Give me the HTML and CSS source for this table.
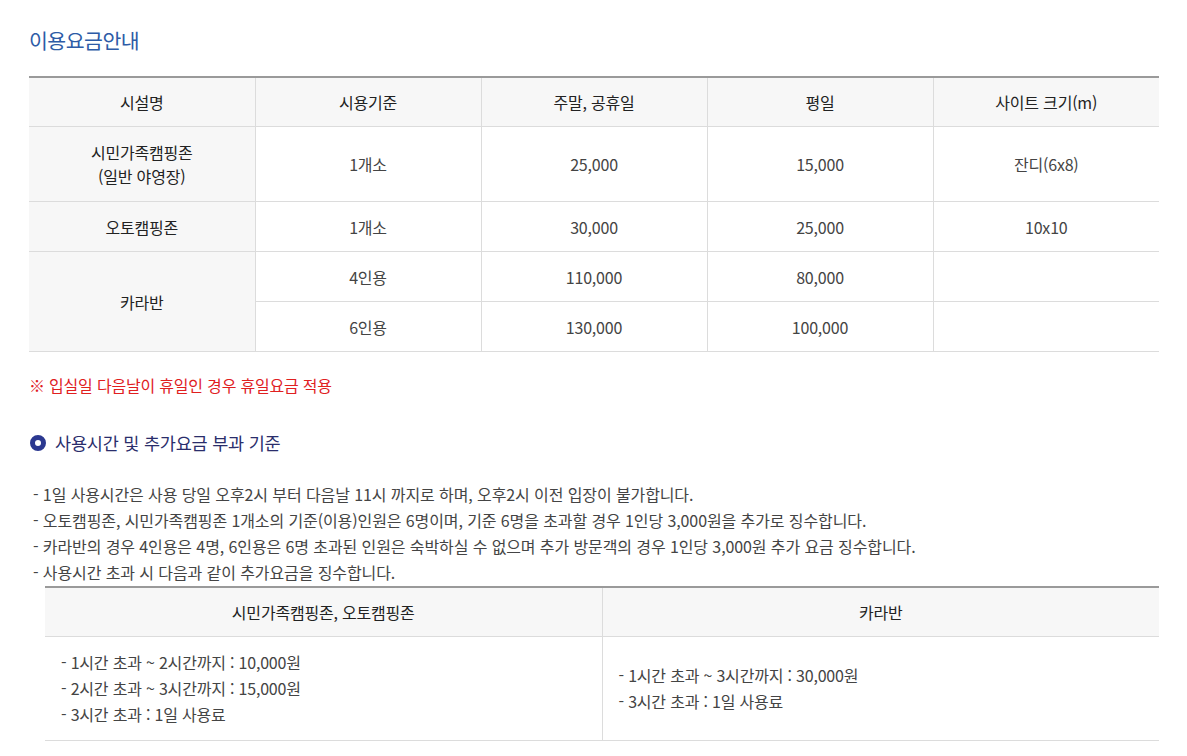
FILE: index.html
```html
<!DOCTYPE html>
<html lang="ko">
    <head>
        <meta charset="UTF-8" />
        <meta name="viewport" content="width=device-width, initial-scale=1.0" />
        <title>이용요금안내</title>
        <link rel="stylesheet" href="styles.css">
    </head>
    <body>
        <main class="content">
            <h2 class="title">이용요금안내</h2>

            <table class="price-table">
                <thead>
                    <tr>
                        <th>시설명</th>
                        <th>시용기준</th>
                        <th>주말, 공휴일</th>
                        <th>평일</th>
                        <th>사이트 크기(m)</th>
                    </tr>
                </thead>
                <tbody>
                    <tr class="tall">
                        <th>시민가족캠핑존<br />(일반 야영장)</th>
                        <td>1개소</td>
                        <td>25,000</td>
                        <td>15,000</td>
                        <td>잔디(6x8)</td>
                    </tr>
                    <tr>
                        <th>오토캠핑존</th>
                        <td>1개소</td>
                        <td>30,000</td>
                        <td>25,000</td>
                        <td>10x10</td>
                    </tr>
                    <tr>
                        <th rowspan="2">카라반</th>
                        <td>4인용</td>
                        <td>110,000</td>
                        <td>80,000</td>
                        <td></td>
                    </tr>
                    <tr>
                        <td>6인용</td>
                        <td>130,000</td>
                        <td>100,000</td>
                        <td></td>
                    </tr>
                </tbody>
            </table>

            <p class="notice">※ 입실일 다음날이 휴일인 경우 휴일요금 적용</p>

            <h3 class="sub-title"><span class="dot"></span>사용시간 및 추가요금 부과 기준</h3>

            <ul class="rules">
                <li>- 1일 사용시간은 사용 당일 오후2시 부터 다음날 11시 까지로 하며, 오후2시 이전 입장이 불가합니다.</li>
                <li>- 오토캠핑존, 시민가족캠핑존 1개소의 기준(이용)인원은 6명이며, 기준 6명을 초과할 경우 1인당 3,000원을 추가로 징수합니다.</li>
                <li>- 카라반의 경우 4인용은 4명, 6인용은 6명 초과된 인원은 숙박하실 수 없으며 추가 방문객의 경우 1인당 3,000원 추가 요금 징수합니다.</li>
                <li>- 사용시간 초과 시 다음과 같이 추가요금을 징수합니다.</li>
            </ul>

            <table class="extra-table">
                <thead>
                    <tr>
                        <th>시민가족캠핑존, 오토캠핑존</th>
                        <th>카라반</th>
                    </tr>
                </thead>
                <tbody>
                    <tr>
                        <td>
                            <p>- 1시간 초과 ~ 2시간까지 : 10,000원</p>
                            <p>- 2시간 초과 ~ 3시간까지 : 15,000원</p>
                            <p>- 3시간 초과 : 1일 사용료</p>
                        </td>
                        <td>
                            <p>- 1시간 초과 ~ 3시간까지 : 30,000원</p>
                            <p>- 3시간 초과 : 1일 사용료</p>
                        </td>
                    </tr>
                </tbody>
            </table>
        </main>
    </body>
</html>
```

FILE: styles.css
```css
body {
    margin: 0px;
    padding: 0px;
    font-family: "Noto Sans CJK KR", "Noto Sans", sans-serif;
    font-size: 16px;
    letter-spacing: -0.2px;
    color: #444444;
    background-color: #ffffff;
}

.content {
    padding: 24px 28px 0px 29px;
}

.title {
    margin: 0px;
    font-size: 20.5px;
    font-weight: normal;
    line-height: 32px;
    color: #2d5ba6;
    letter-spacing: -0.5px;
}

table {
    border-collapse: collapse;
    width: 100%;
    table-layout: fixed;
}

th,
td {
    text-align: center;
    border: 1px solid #dcdcdc;
    padding: 0px;
    line-height: 24px;
}

th:first-child,
td:first-child {
    border-left: none;
}

th:last-child,
td:last-child {
    border-right: none;
}

.price-table {
    margin-top: 20px;
    border-top: 2px solid #9a9a9a;
}

.price-table th {
    font-weight: normal;
    color: #222222;
    background-color: #f7f7f7;
}

.price-table thead th {
    height: 48px;
    border-top: none;
}

.price-table td,
.price-table tbody th {
    height: 49px;
}

.price-table .tall td,
.price-table .tall th {
    height: 74px;
}

.notice {
    margin: 21px 0px 0px 0px;
    color: #e0201f;
    line-height: 24px;
}

.sub-title {
    display: flex;
    align-items: center;
    gap: 9px;
    margin: 33px 0px 0px 1px;
    font-size: 17.5px;
    font-weight: normal;
    line-height: 26px;
    color: #2a2d6b;
}

.dot {
    width: 6px;
    height: 6px;
    border: 5px solid #2b3890;
    border-radius: 50%;
}

.rules {
    list-style: none;
    margin: 25px 0px 0px 4px;
    padding: 0px;
    letter-spacing: -0.1px;
}

.rules li {
    line-height: 26px;
}

.extra-table {
    margin-top: 1px;
    margin-left: 16px;
    width: calc(100% - 16px);
    border-top: 2px solid #9a9a9a;
}

.extra-table th {
    height: 48px;
    font-weight: normal;
    color: #222222;
    background-color: #f7f7f7;
    border-top: none;
}

.extra-table td {
    text-align: left;
    padding: 12px 16px 13px 16px;
}

.extra-table td p {
    margin: 0px;
    line-height: 26px;
}
```
